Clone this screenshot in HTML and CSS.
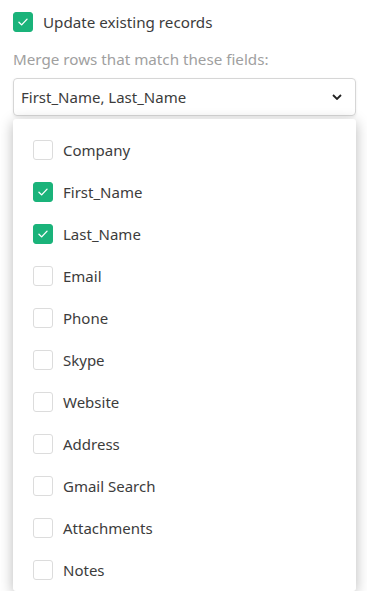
FILE: index.html
```html
<!DOCTYPE html>
<html lang="en">
<head>
    <meta charset="UTF-8">
    <meta name="viewport" content="width=device-width, initial-scale=1.0">
    <title>Merge Settings</title>
    <link rel="stylesheet" href="styles.css">
</head>
<body>
    <div class="panel">
        <label class="check-row">
            <span class="box checked">
                <svg viewBox="0 0 20 20"><path d="M5.5 10.2l3 3 6-6.4"/></svg>
            </span>
            <span class="check-text">Update existing records</span>
        </label>

        <div class="field-label">Merge rows that match these fields:</div>

        <div class="select">
            <span class="select-value">First_Name, Last_Name</span>
            <svg class="chevron" viewBox="0 0 10 6"><path d="M1 1l4 4 4-4"/></svg>
        </div>

        <ul class="menu">
            <li class="menu-item"><span class="box"></span>Company</li>
            <li class="menu-item"><span class="box checked"><svg viewBox="0 0 20 20"><path d="M5.5 10.2l3 3 6-6.4"/></svg></span>First_Name</li>
            <li class="menu-item"><span class="box checked"><svg viewBox="0 0 20 20"><path d="M5.5 10.2l3 3 6-6.4"/></svg></span>Last_Name</li>
            <li class="menu-item"><span class="box"></span>Email</li>
            <li class="menu-item"><span class="box"></span>Phone</li>
            <li class="menu-item"><span class="box"></span>Skype</li>
            <li class="menu-item"><span class="box"></span>Website</li>
            <li class="menu-item"><span class="box"></span>Address</li>
            <li class="menu-item"><span class="box"></span>Gmail Search</li>
            <li class="menu-item"><span class="box"></span>Attachments</li>
            <li class="menu-item"><span class="box"></span>Notes</li>
        </ul>
    </div>
</body>
</html>
```

FILE: styles.css
```css
:root {
    --green: #1ab37a;
    --text-color: #3c3c3c;
    --muted: #a0a0a0;
    --border: #d6d6d6;
}

body {
    margin: 0;
    background-color: #ffffff;
    font-family: 'Noto Sans', sans-serif;
    font-size: 15px;
    color: var(--text-color);
    overflow: hidden;
}

.panel {
    width: 343px;
    padding: 12px 0 0 13px;
}

.box {
    width: 20px;
    height: 20px;
    box-sizing: border-box;
    border: 1px solid #dcdcdc;
    border-radius: 3px;
    background-color: #ffffff;
    display: flex;
    align-items: center;
    justify-content: center;
    flex-shrink: 0;
}

.box.checked {
    background-color: var(--green);
    border-color: var(--green);
}

.box svg {
    width: 20px;
    height: 20px;
    fill: none;
    stroke: #ffffff;
    stroke-width: 1.5;
    stroke-linecap: round;
    stroke-linejoin: round;
}

.check-row {
    display: flex;
    align-items: center;
    gap: 10px;
    height: 20px;
}

.check-text {
    font-size: 15.2px;
}

.field-label {
    margin-top: 17px;
    color: var(--muted);
    font-size: 15.2px;
    line-height: 20px;
}

.select {
    margin-top: 9px;
    height: 38px;
    box-sizing: border-box;
    border: 1px solid var(--border);
    border-radius: 4px;
    display: flex;
    align-items: center;
    justify-content: space-between;
    padding: 0 13px 0 7px;
    box-shadow: 0 1px 3px rgba(0, 0, 0, 0.08);
}

.chevron {
    width: 10px;
    height: 6px;
    fill: none;
    stroke: #222222;
    stroke-width: 1.8;
}

.menu {
    list-style: none;
    margin: 3px 0 0 0;
    padding: 10px 0 0 0;
    height: 472px;
    box-sizing: border-box;
    background-color: #ffffff;
    border-radius: 3px;
    box-shadow: 0 3px 14px rgba(0, 0, 0, 0.28);
}

.menu-item {
    display: flex;
    align-items: center;
    gap: 10px;
    height: 42px;
    padding-left: 20px;
}
```
